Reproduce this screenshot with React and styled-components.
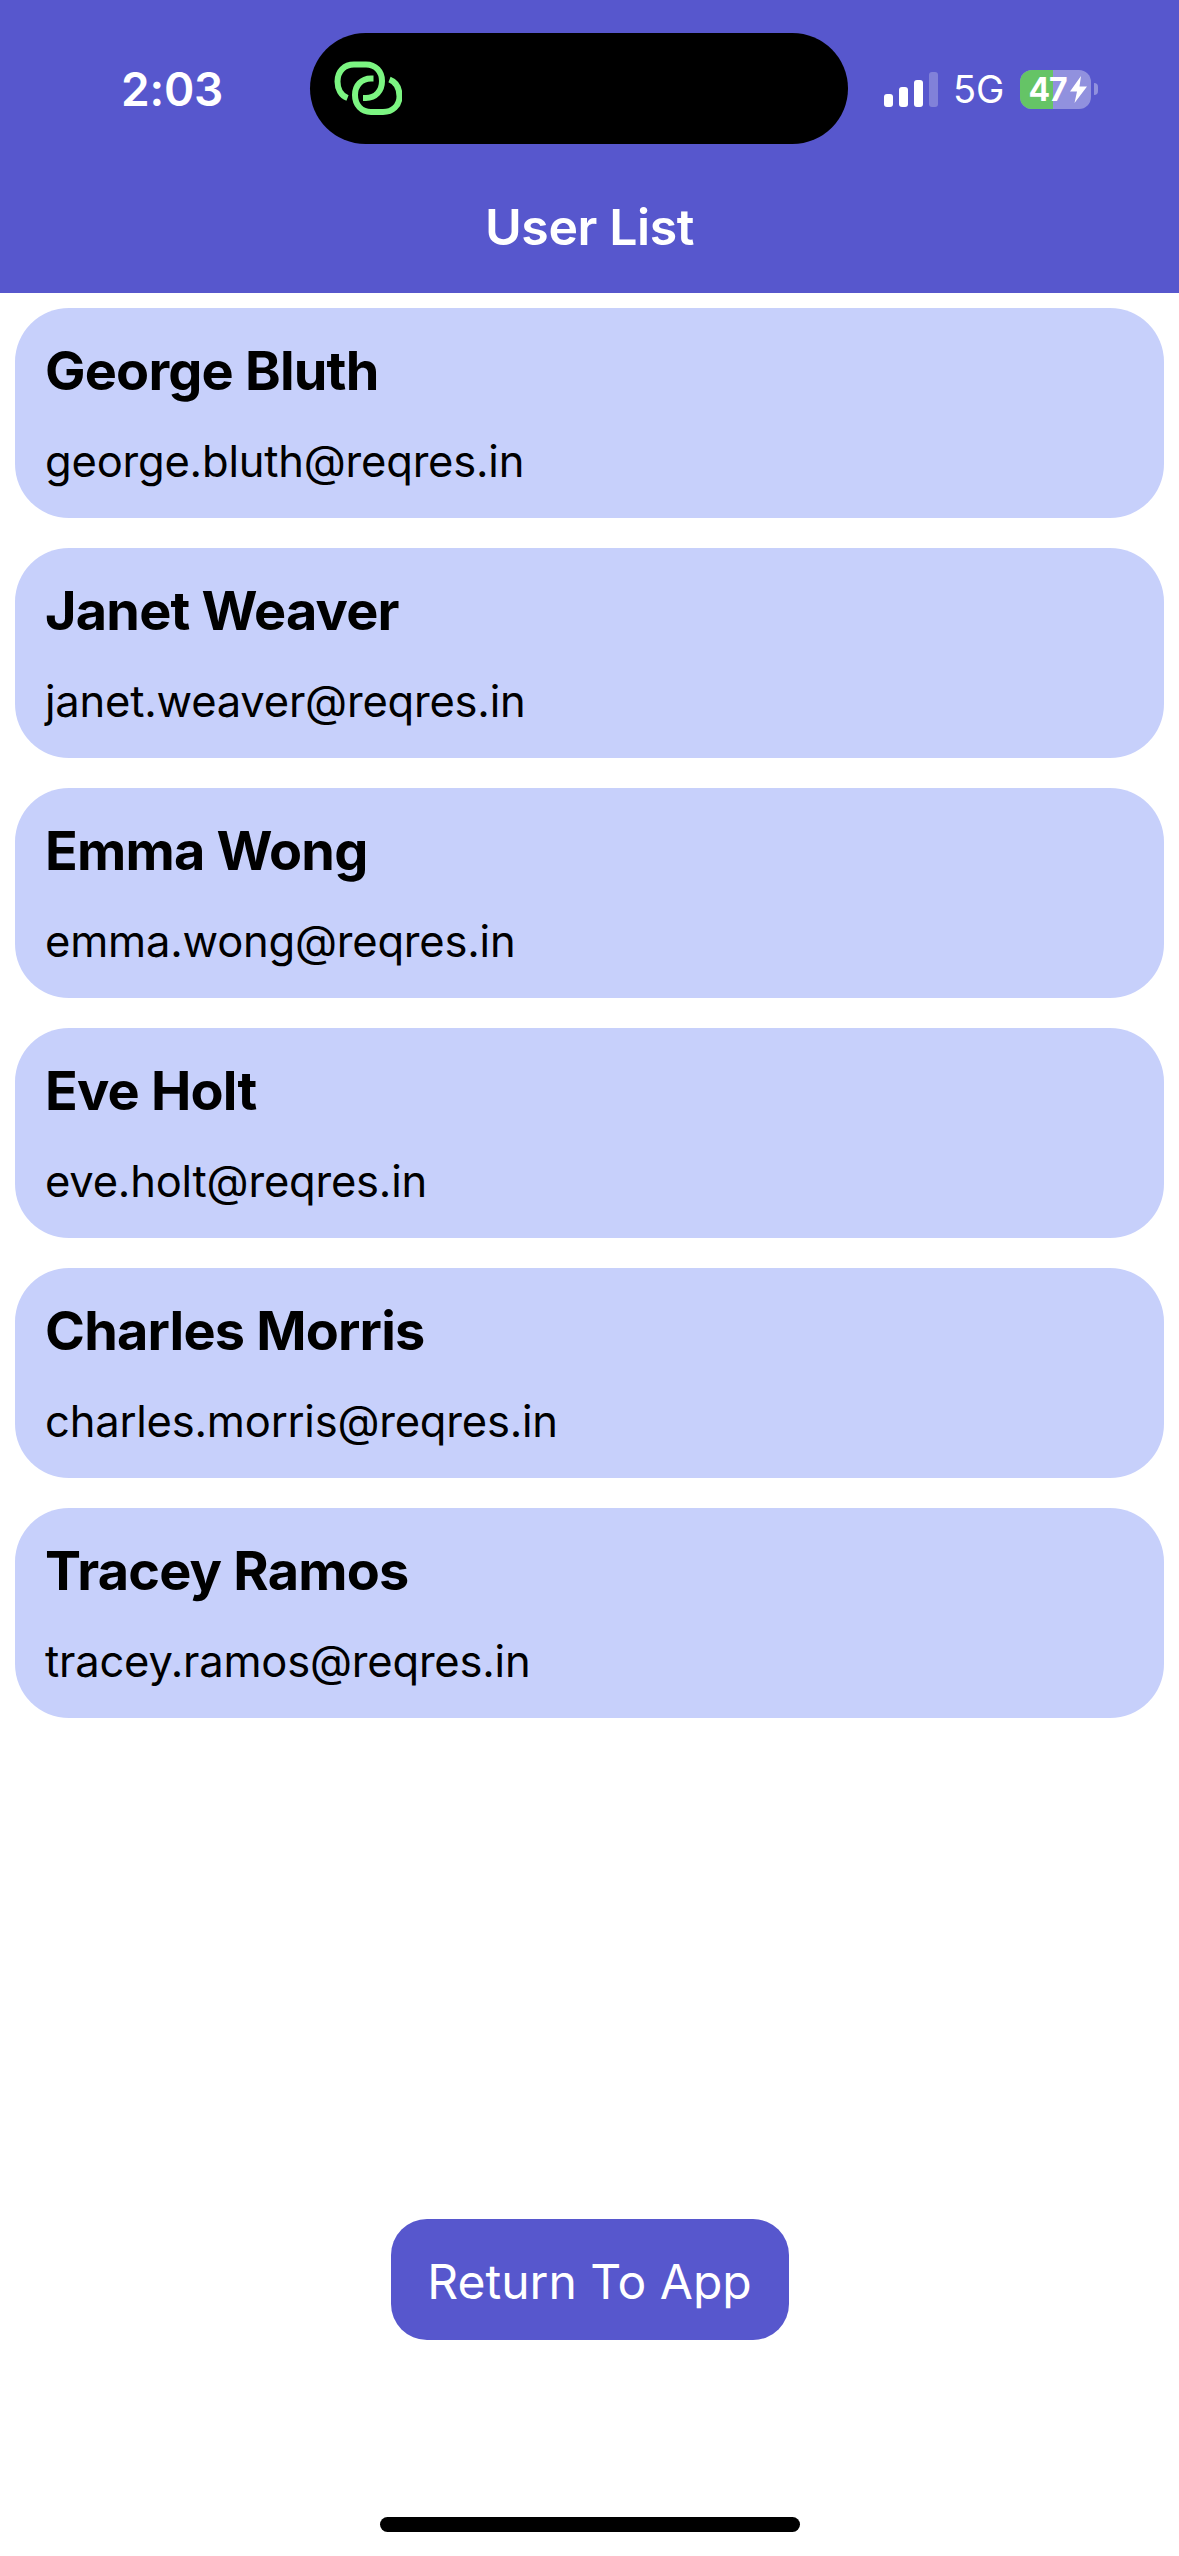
import React from "react";
import styled, { createGlobalStyle } from "styled-components";

const users = [
  { name: "George Bluth", email: "george.bluth@reqres.in" },
  { name: "Janet Weaver", email: "janet.weaver@reqres.in" },
  { name: "Emma Wong", email: "emma.wong@reqres.in" },
  { name: "Eve Holt", email: "eve.holt@reqres.in" },
  { name: "Charles Morris", email: "charles.morris@reqres.in" },
  { name: "Tracey Ramos", email: "tracey.ramos@reqres.in" },
];

const signalBars = [13, 20, 27, 35];

const App = () => {
  return (
    <Page>
      <GlobalStyle />
      <Header>
        <StatusBar>
          <Time>2:03</Time>
          <Island>
            <LinkIcon viewBox="0 0 68 55" fill="none">
              <path d="M13.5 37C7 34.5 3.5 28 3.5 20.5C3.5 10 10.5 3.5 20 3.5H32C41.5 3.5 48 10.5 48 20C48 30 41.5 37 32 37H29" />
              <path d="M39.5 17.5H37C27.5 17.5 21 24.5 21 34C21 44 27.5 51 37 51H49C58.5 51 65.5 44.5 65.5 35.5C65.5 27.5 62 21 55.5 18.5" />
            </LinkIcon>
          </Island>
          <StatusRight>
            <Signal>
              {signalBars.map((h, i) => (
                <SignalBar key={h} $height={h} $dim={i === 3} />
              ))}
            </Signal>
            <Network>5G</Network>
            <Battery>
              <BatteryBody>
                <BatteryFill />
                <BatteryLabel>
                  47
                  <svg width="17" height="27" viewBox="0 0 17 27">
                    <path d="M11 0L0 15.5H7L4.5 27L17 10.5H9.5L11 0Z" fill="#fff" />
                  </svg>
                </BatteryLabel>
              </BatteryBody>
              <BatteryNub />
            </Battery>
          </StatusRight>
        </StatusBar>
        <Title>User List</Title>
      </Header>
      <UserList>
        {users.map((user) => (
          <UserCard key={user.email}>
            <UserName>{user.name}</UserName>
            <UserEmail>{user.email}</UserEmail>
          </UserCard>
        ))}
      </UserList>
      <Footer>
        <ReturnButton>Return To App</ReturnButton>
        <HomeBar />
      </Footer>
    </Page>
  );
};

export default App;

const GlobalStyle = createGlobalStyle`
  html, body {
    margin: 0;
    padding: 0;
    background: #fff;
  }
  * {
    box-sizing: border-box;
  }
`;

const Page = styled.div`
  width: 1179px;
  height: 2556px;
  display: flex;
  flex-direction: column;
  overflow: hidden;
  background: #fff;
  font-family: Inter, "Liberation Sans", sans-serif;
`;

const Header = styled.header`
  height: 293px;
  padding-top: 33px;
  background: #5757cd;
  color: #fff;
`;

const StatusBar = styled.div`
  display: flex;
  align-items: flex-start;
  height: 111px;
`;

const Time = styled.div`
  flex: 0 0 310px;
  padding: 28px 0 0 121px;
  font-size: 46px;
  line-height: 56px;
  font-weight: 600;
  letter-spacing: -0.2px;
`;

const Island = styled.div`
  flex: 0 0 538px;
  height: 111px;
  padding: 28px 0 0 24px;
  background: #000;
  border-radius: 56px;
`;

const LinkIcon = styled.svg`
  display: block;
  width: 68px;
  height: 55px;
  stroke: #7cf582;
  stroke-width: 6px;
`;

const StatusRight = styled.div`
  display: flex;
  align-items: center;
  height: 44px;
  margin: 34px 0 0 36px;
`;

const Signal = styled.div`
  display: flex;
  align-items: flex-end;
  gap: 6px;
  height: 35px;
`;

const SignalBar = styled.div`
  width: 9px;
  height: ${(p) => p.$height}px;
  background: #fff;
  border-radius: 3px;
  opacity: ${(p) => (p.$dim ? 0.25 : 1)};
`;

const Network = styled.div`
  margin-left: 15px;
  font-size: 38px;
  line-height: 44px;
  font-weight: 400;
`;

const Battery = styled.div`
  display: flex;
  align-items: center;
  margin-left: 16px;
`;

const BatteryBody = styled.div`
  position: relative;
  width: 71px;
  height: 39px;
  overflow: hidden;
  border-radius: 12px;
  background: rgba(255, 255, 255, 0.35);
`;

const BatteryFill = styled.div`
  width: 33px;
  height: 100%;
  background: #65c466;
`;

const BatteryLabel = styled.div`
  position: absolute;
  top: 0;
  left: 8px;
  display: flex;
  align-items: center;
  gap: 3px;
  height: 39px;
  font-size: 32px;
  font-weight: 700;
  letter-spacing: -1px;
  color: #fff;
`;

const BatteryNub = styled.div`
  width: 4px;
  height: 12px;
  margin-left: 3px;
  background: rgba(255, 255, 255, 0.35);
  border-radius: 0 4px 4px 0;
`;

const Title = styled.h1`
  margin: 53px 0 0;
  text-align: center;
  font-size: 50px;
  line-height: 60px;
  font-weight: 600;
  letter-spacing: -0.4px;
`;

const UserList = styled.div`
  display: flex;
  flex-direction: column;
  gap: 30px;
  padding: 15px 15px 0 15px;
`;

const UserCard = styled.div`
  height: 210px;
  padding: 30px 30px 0;
  background: #c7d0fb;
  border-radius: 54px;
`;

const UserName = styled.div`
  font-size: 54px;
  line-height: 66px;
  font-weight: 700;
  letter-spacing: -0.8px;
  color: #000;
`;

const UserEmail = styled.div`
  margin-top: 29px;
  font-size: 43.5px;
  line-height: 56px;
  letter-spacing: -0.2px;
  color: #000;
`;

const Footer = styled.div`
  flex: 1;
  display: flex;
  flex-direction: column;
  align-items: center;
  justify-content: flex-end;
  padding-bottom: 24px;
`;

const ReturnButton = styled.button`
  width: 398px;
  height: 121px;
  padding: 4px 0 0;
  border: none;
  border-radius: 36px;
  background: #5757cd;
  color: #fff;
  font-family: inherit;
  font-size: 48px;
  font-weight: 400;
`;

const HomeBar = styled.div`
  width: 420px;
  height: 15px;
  margin-top: 177px;
  background: #000;
  border-radius: 8px;
`;
